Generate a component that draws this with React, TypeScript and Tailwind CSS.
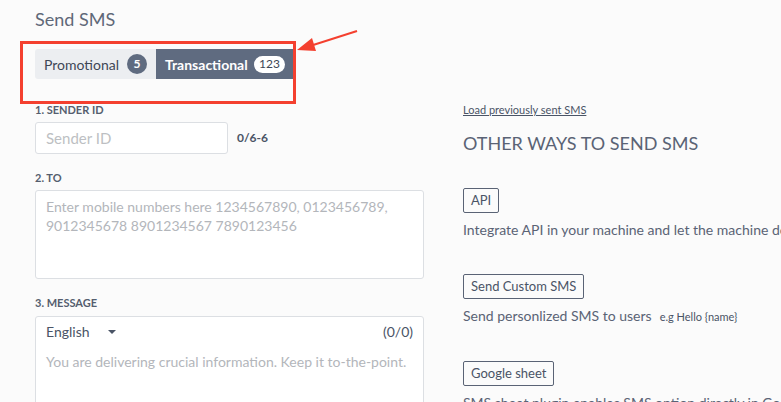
import React from 'react'

const otherWays = [
  { button: 'API', text: 'Integrate API in your machine and let the machine do the rest for you', hint: '' },
  { button: 'Send Custom SMS', text: 'Send personlized SMS to users', hint: 'e.g Hello {name}' },
  { button: 'Google sheet', text: 'SMS sheet plugin enables SMS option directly in Google sheet', hint: '' },
]

function Label({ children }: { children: React.ReactNode }) {
  return <p className="text-[11px] font-bold uppercase leading-[14px] text-[#555e6e]">{children}</p>
}

export default function App() {
  return (
    <div className="relative h-[402px] w-[781px] overflow-hidden bg-[#fbfbfb] font-['Lato',sans-serif] text-[#5a6375]">
      <h1 className="pl-[35px] pt-[7px] text-[18px] leading-[24px] text-[#5f6878]">Send SMS</h1>

      {/* highlighted tab switcher */}
      <div className="ml-[20px] mt-[10px] h-[63px] w-[276px] border-[3px] border-[#f4402f] pl-[12px] pt-[5px]">
        <div className="flex h-[30px] text-[14px]">
          <div className="flex w-[121px] items-center justify-between rounded-l-[3px] bg-[#eceef1] pl-[9px] pr-[9px] text-[#3e4656]">
            Promotional
            <span className="flex h-[20px] w-[20px] items-center justify-center rounded-full bg-[#5f6b80] text-[12px] font-bold text-white">5</span>
          </div>
          <div className="flex flex-1 items-center justify-between bg-[#5f6b80] pl-[9px] pr-[8px] font-bold text-white">
            Transactional
            <span className="flex h-[17px] w-[31px] items-center justify-center rounded-full bg-white text-[12px] font-normal text-[#3e4656]">123</span>
          </div>
        </div>
      </div>

      <svg className="absolute left-0 top-0" width="781" height="402">
        <line x1="357" y1="31" x2="310" y2="46" stroke="#f4402f" strokeWidth="2" />
        <polygon points="297,50 312,38 316,51" fill="#f4402f" />
      </svg>

      <div className="-mt-[1px] flex pl-[35px]">
        <div className="w-[389px] shrink-0">
          <Label>1. Sender ID</Label>
          <div className="mt-[5px] flex items-center gap-[9px]">
            <div className="flex h-[32px] w-[193px] items-center rounded-[3px] border border-[#dcdfe3] bg-white pl-[10px] text-[15px] text-[#bdbfc3]">
              Sender ID
            </div>
            <span className="text-[12px] font-bold text-[#4a5466]">0/6-6</span>
          </div>

          <div className="mt-[17px]">
            <Label>2. To</Label>
          </div>
          <div className="mt-[5px] h-[89px] rounded-[3px] border border-[#dcdfe3] bg-white px-[10px] pt-[6px] text-[14px] leading-[19px] text-[#b3b6bb]">
            Enter mobile numbers here 1234567890, 0123456789,
            <br />
            9012345678 8901234567 7890123456
          </div>

          <div className="mt-[17px]">
            <Label>3. Message</Label>
          </div>
          <div className="mt-[6px] h-[120px] rounded-t-[3px] border border-[#dcdfe3] bg-white px-[10px] pt-[5px]">
            <div className="flex items-center justify-between text-[14px] leading-[20px] text-[#4a5466]">
              <span className="flex items-center">
                English
                <span className="ml-[18px] h-0 w-0 border-x-[4px] border-t-[4px] border-x-transparent border-t-[#4a5466]" />
              </span>
              <span>(0/0)</span>
            </div>
            <p className="mt-[9px] whitespace-nowrap text-[14px] text-[#b3b6bb]">You are delivering crucial information. Keep it to-the-point.</p>
          </div>
        </div>

        <div className="ml-[39px] min-w-0 flex-1 whitespace-nowrap">
          <a className="block text-[11px] leading-[14px] text-[#4a5466] underline">Load previously sent SMS</a>
          <h2 className="mt-[14px] text-[18px] leading-[24px] text-[#5a6375]">OTHER WAYS TO SEND SMS</h2>
          <div className="mt-[33px] flex flex-col gap-[34px]">
            {otherWays.map((way) => (
              <div key={way.button}>
                <span className="flex h-[25px] w-fit items-center rounded-[2px] border border-[#5a6375] px-[7px] text-[13px] leading-none text-[#4a5466]">
                  {way.button}
                </span>
                <p className="mt-[7px] text-[14px] leading-[20px]">
                  {way.text}
                  {way.hint && <span className="ml-[8px] text-[11px] text-[#4a5466]">{way.hint}</span>}
                </p>
              </div>
            ))}
          </div>
        </div>
      </div>
    </div>
  )
}
